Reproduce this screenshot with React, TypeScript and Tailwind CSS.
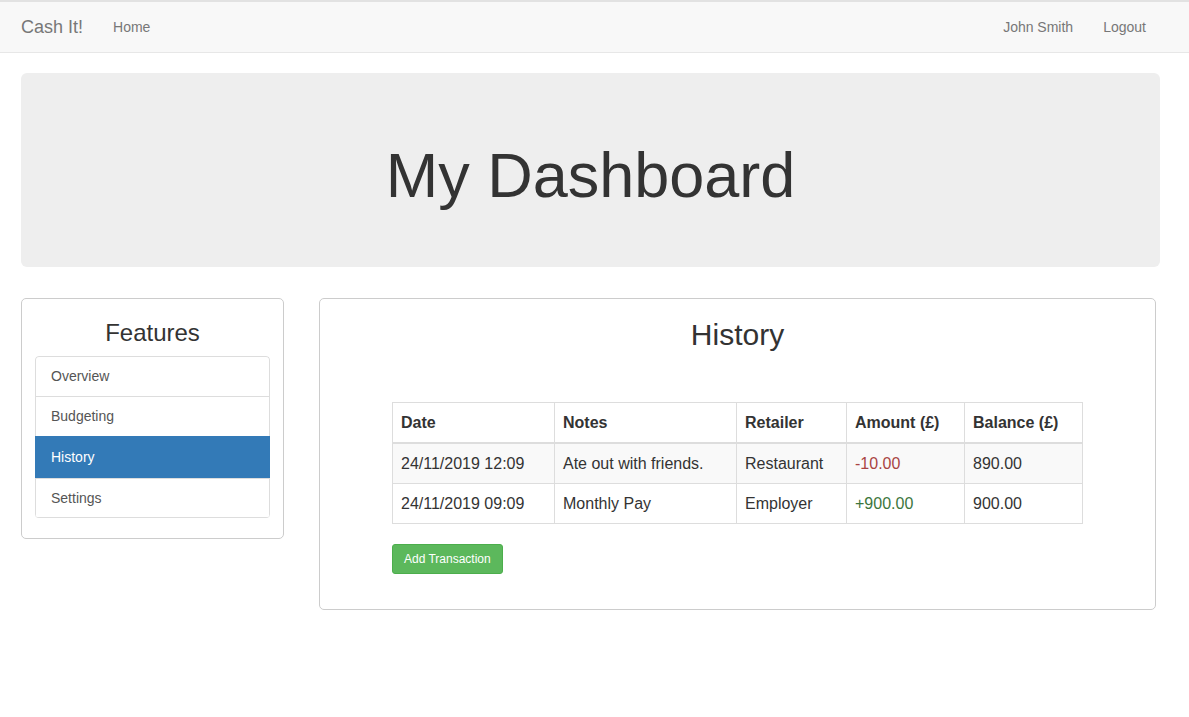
const rows = [
  {
    date: "24/11/2019 12:09",
    notes: "Ate out with friends.",
    retailer: "Restaurant",
    amount: "-10.00",
    balance: "890.00",
  },
  {
    date: "24/11/2019 09:09",
    notes: "Monthly Pay",
    retailer: "Employer",
    amount: "+900.00",
    balance: "900.00",
  },
];

const features = ["Overview", "Budgeting", "History", "Settings"];

function Navbar() {
  return (
    <div className="border-t-2 border-b border-t-[#e2e2e2] border-b-[#e7e7e7] bg-[#f8f8f8]">
      <div className="flex h-[50px] items-center pl-[21px] pr-[28px] text-[#777]">
        <span className="text-[18px]">Cash It!</span>
        <span className="ml-[30px] text-[14px]">Home</span>
        <div className="ml-auto flex text-[14px]">
          <span className="px-[15px]">John Smith</span>
          <span className="px-[15px]">Logout</span>
        </div>
      </div>
    </div>
  );
}

function FeaturesPanel() {
  return (
    <div className="w-[263px] rounded-[5px] border border-[#ccc] px-[13px] pt-[21px] pb-[20px]">
      <h3 className="mb-[10px] text-center text-[24px] leading-[1.1] text-[#333]">
        Features
      </h3>
      <div className="overflow-hidden rounded-[4px] border-b border-[#ddd]">
        {features.map((item, i) => {
          const active = item === "History";
          const last = i === features.length - 1;
          return (
            <div
              key={item}
              className={
                "flex items-center px-[15px] text-[14px] border-t border-x " +
                (active
                  ? "h-[42px] border-[#337ab7] bg-[#337ab7] text-white"
                  : (last ? "h-[39px] " : "h-[40px] ") + "border-[#ddd] bg-white text-[#555]") +
                (i === 0 ? " rounded-t-[4px]" : "")
              }
            >
              {item}
            </div>
          );
        })}
      </div>
    </div>
  );
}

function HistoryPanel() {
  return (
    <div className="w-[837px] rounded-[5px] border border-[#ccc] px-[72px] pt-[19px] pb-[35px]">
      <h2 className="mb-[51px] text-center text-[30px] leading-[1.1] text-[#333]">
        History
      </h2>
      <table className="w-[690px] table-fixed border-collapse text-[16px] leading-[23px] text-[#333]">
        <colgroup>
          <col className="w-[162px]" />
          <col className="w-[182px]" />
          <col className="w-[110px]" />
          <col className="w-[118px]" />
          <col className="w-[118px]" />
        </colgroup>
        <thead>
          <tr>
            {["Date", "Notes", "Retailer", "Amount (£)", "Balance (£)"].map((h) => (
              <th
                key={h}
                className="border border-b-2 border-[#ddd] px-2 py-2 text-left font-bold"
              >
                {h}
              </th>
            ))}
          </tr>
        </thead>
        <tbody>
          {rows.map((r, i) => (
            <tr key={r.date} className={i === 0 ? "bg-[#f9f9f9]" : "bg-white"}>
              <td className="border border-[#ddd] px-2 py-2">{r.date}</td>
              <td className="border border-[#ddd] px-2 py-2">{r.notes}</td>
              <td className="border border-[#ddd] px-2 py-2">{r.retailer}</td>
              <td
                className={
                  "border border-[#ddd] px-2 py-2 " +
                  (r.amount.startsWith("-") ? "text-[#a94442]" : "text-[#3c763d]")
                }
              >
                {r.amount}
              </td>
              <td className="border border-[#ddd] px-2 py-2">{r.balance}</td>
            </tr>
          ))}
        </tbody>
      </table>
      <button className="mt-[20px] rounded-[3px] border border-[#4cae4c] bg-[#5cb85c] px-[11px] py-[5px] text-[12px] leading-[18px] text-white">
        Add Transaction
      </button>
    </div>
  );
}

export default function App() {
  return (
    <div className="min-h-[717px] bg-white font-['Liberation_Sans',Arial,sans-serif]">
      <Navbar />
      <div className="pl-[21px] pt-[20px]">
        <div className="h-[194px] w-[1139px] rounded-[6px] bg-[#eee] pt-[68px]">
          <h1 className="text-center text-[63px] leading-[1.1] text-[#333]">
            My Dashboard
          </h1>
        </div>
        <div className="mt-[31px] flex items-start gap-[35px]">
          <FeaturesPanel />
          <HistoryPanel />
        </div>
      </div>
    </div>
  );
}
